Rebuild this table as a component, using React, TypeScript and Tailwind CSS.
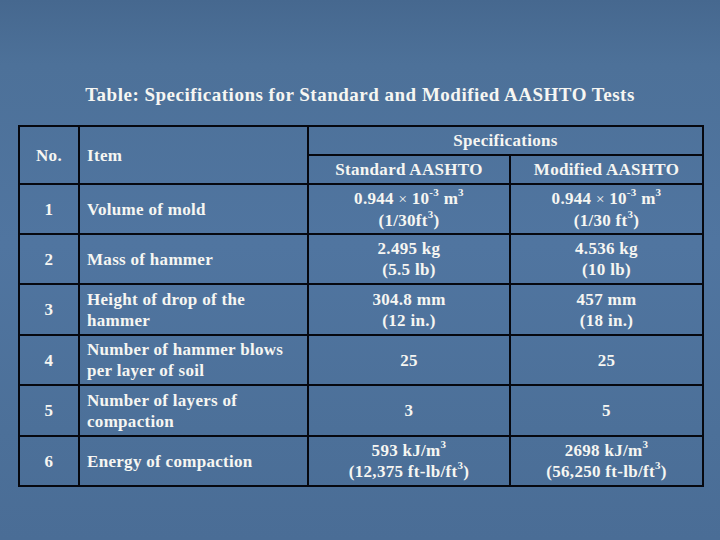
import React from "react";

const Sup = ({ children }: { children: React.ReactNode }) => (
  <sup className="text-[11px] relative -top-[1px] align-super leading-none">{children}</sup>
);

const Times = () => <span className="font-normal text-[15px]">×</span>;

type Row = {
  no: string;
  item: React.ReactNode;
  std: React.ReactNode;
  mod: React.ReactNode;
  h: string;
};

const rows: Row[] = [
  {
    no: "1",
    item: "Volume of mold",
    std: (
      <>
        0.944 <Times /> 10<Sup>-3</Sup> m<Sup>3</Sup>
        <br />
        (1/30ft<Sup>3</Sup>)
      </>
    ),
    mod: (
      <>
        0.944 <Times /> 10<Sup>-3</Sup> m<Sup>3</Sup>
        <br />
        (1/30 ft<Sup>3</Sup>)
      </>
    ),
    h: "h-[50px]",
  },
  {
    no: "2",
    item: "Mass of hammer",
    std: (
      <>
        2.495 kg
        <br />
        (5.5 lb)
      </>
    ),
    mod: (
      <>
        4.536 kg
        <br />
        (10 lb)
      </>
    ),
    h: "h-[50px]",
  },
  {
    no: "3",
    item: (
      <>
        Height of drop of the
        <br />
        hammer
      </>
    ),
    std: (
      <>
        304.8 mm
        <br />
        (12 in.)
      </>
    ),
    mod: (
      <>
        457 mm
        <br />
        (18 in.)
      </>
    ),
    h: "h-[51px]",
  },
  {
    no: "4",
    item: (
      <>
        Number of hammer blows
        <br />
        per layer of soil
      </>
    ),
    std: "25",
    mod: "25",
    h: "h-[50px]",
  },
  {
    no: "5",
    item: (
      <>
        Number of layers of
        <br />
        compaction
      </>
    ),
    std: "3",
    mod: "5",
    h: "h-[51px]",
  },
  {
    no: "6",
    item: "Energy of compaction",
    std: (
      <>
        593 kJ/m<Sup>3</Sup>
        <br />
        (12,375 ft-lb/ft<Sup>3</Sup>)
      </>
    ),
    mod: (
      <>
        2698 kJ/m<Sup>3</Sup>
        <br />
        (56,250 ft-lb/ft<Sup>3</Sup>)
      </>
    ),
    h: "h-[50px]",
  },
];

export default function App() {
  const cell = "border-2 border-[#06080f] p-0";
  return (
    <div
      className="w-[720px] h-[540px] overflow-hidden bg-[linear-gradient(180deg,#46688f_0%,#4d7199_12%,#5075a0_45%,#4c7099_80%,#4a6d96_100%)] text-[#f6f6f2] font-bold"
      style={{ fontFamily: '"Liberation Serif", "Times New Roman", serif' }}
    >
      <div className="pt-[84px] text-center text-[19px] leading-[22px] tracking-[0.5px]">
        Table: Specifications for Standard and Modified AASHTO Tests
      </div>
      <div className="pt-[19px] pl-[18px]">
        <table className="border-collapse text-[17px] leading-[21px] tracking-[0.3px]">
          <colgroup>
            <col className="w-[60px]" />
            <col className="w-[229px]" />
            <col className="w-[202px]" />
            <col className="w-[193px]" />
          </colgroup>
          <tbody>
            <tr className="h-[29px]">
              <td rowSpan={2} className={`${cell} text-center align-middle`}>
                No.
              </td>
              <td rowSpan={2} className={`${cell} pl-[7px] text-left align-middle`}>
                Item
              </td>
              <td colSpan={2} className={`${cell} text-center align-middle`}>
                Specifications
              </td>
            </tr>
            <tr className="h-[29px]">
              <td className={`${cell} text-center align-middle`}>Standard AASHTO</td>
              <td className={`${cell} text-center align-middle`}>Modified AASHTO</td>
            </tr>
            {rows.map((r) => (
              <tr key={r.no} className={r.h}>
                <td className={`${cell} text-center align-middle`}>{r.no}</td>
                <td className={`${cell} pl-[7px] text-left align-middle`}>{r.item}</td>
                <td className={`${cell} text-center align-middle`}>{r.std}</td>
                <td className={`${cell} text-center align-middle`}>{r.mod}</td>
              </tr>
            ))}
          </tbody>
        </table>
      </div>
    </div>
  );
}
